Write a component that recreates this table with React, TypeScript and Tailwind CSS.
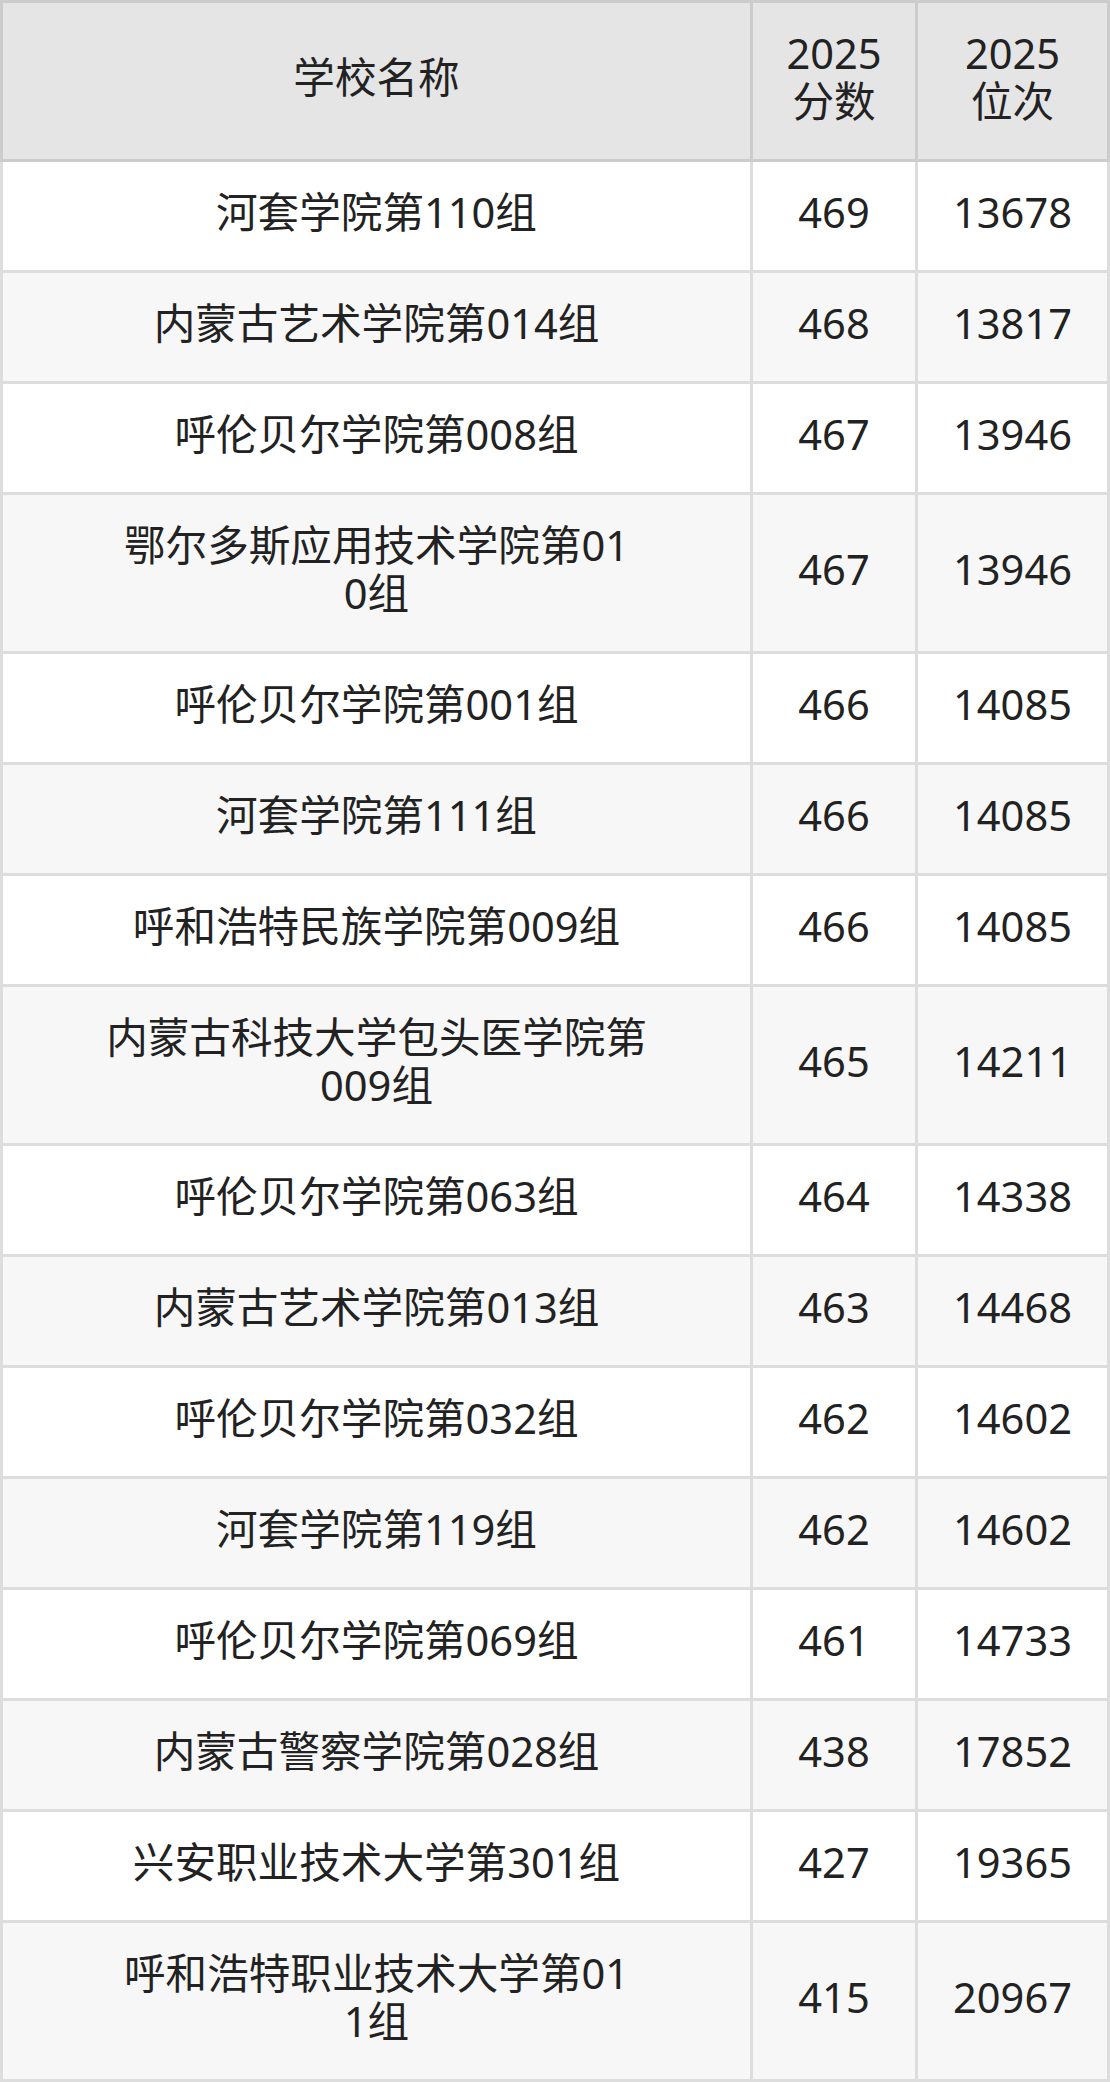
const rows: [string[], string, string][] = [
  [["河套学院第110组"], "469", "13678"],
  [["内蒙古艺术学院第014组"], "468", "13817"],
  [["呼伦贝尔学院第008组"], "467", "13946"],
  [["鄂尔多斯应用技术学院第01", "0组"], "467", "13946"],
  [["呼伦贝尔学院第001组"], "466", "14085"],
  [["河套学院第111组"], "466", "14085"],
  [["呼和浩特民族学院第009组"], "466", "14085"],
  [["内蒙古科技大学包头医学院第", "009组"], "465", "14211"],
  [["呼伦贝尔学院第063组"], "464", "14338"],
  [["内蒙古艺术学院第013组"], "463", "14468"],
  [["呼伦贝尔学院第032组"], "462", "14602"],
  [["河套学院第119组"], "462", "14602"],
  [["呼伦贝尔学院第069组"], "461", "14733"],
  [["内蒙古警察学院第028组"], "438", "17852"],
  [["兴安职业技术大学第301组"], "427", "19365"],
  [["呼和浩特职业技术大学第01", "1组"], "415", "20967"],
];

function Lines({ parts }: { parts: string[] }) {
  return (
    <>
      {parts.map((p, i) => (
        <span key={i} className="block">
          {p}
        </span>
      ))}
    </>
  );
}

export default function App() {
  return (
    <div className="w-[1110px] bg-white font-['Noto_Sans','Noto_Sans_CJK_SC',sans-serif] text-[41.6px] leading-[48px] text-[#222]">
      <table className="w-full table-fixed border-collapse border-[3px] border-[#cccccc]">
        <colgroup>
          <col className="w-[750px]" />
          <col className="w-[165px]" />
          <col />
        </colgroup>
        <thead>
          <tr className="bg-[#e5e5e5]">
            <th className="border-[3px] border-[#cccccc] pt-[26px] pb-[34px] text-center font-normal">
              学校名称
            </th>
            <th className="border-[3px] border-[#cccccc] pt-[26px] pb-[34px] text-center font-normal">
              <Lines parts={["2025", "分数"]} />
            </th>
            <th className="border-[3px] border-[#cccccc] pt-[26px] pb-[34px] text-center font-normal">
              <Lines parts={["2025", "位次"]} />
            </th>
          </tr>
        </thead>
        <tbody>
          {rows.map(([name, score, rank], i) => (
            <tr key={i} className={i % 2 === 0 ? "bg-white" : "bg-[#f7f7f7]"}>
              <td className="border-[3px] border-[#dddddd] pt-[26px] pb-[34px] text-center align-middle">
                <Lines parts={name} />
              </td>
              <td className="border-[3px] border-[#dddddd] pt-[26px] pb-[34px] text-center align-middle">
                {score}
              </td>
              <td className="border-[3px] border-[#dddddd] pt-[26px] pb-[34px] text-center align-middle">
                {rank}
              </td>
            </tr>
          ))}
        </tbody>
      </table>
    </div>
  );
}
